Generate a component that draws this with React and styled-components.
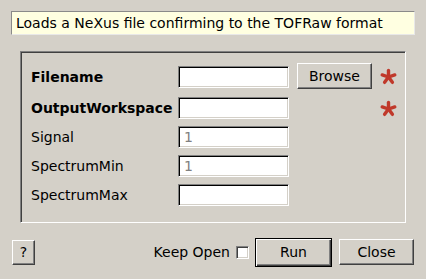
import React from "react";
import styled, { createGlobalStyle, css } from "styled-components";

const Global = createGlobalStyle`
  html, body { margin: 0; padding: 0; background: #d4d0c8; }
  body { font-family: "DejaVu Sans", "Liberation Sans", sans-serif; font-size: 14px; color: #000; }
`;

const Dialog = styled.div`
  width: 426px;
  height: 279px;
  box-sizing: border-box;
  padding: 11px;
  display: flex;
  flex-direction: column;
`;

const Info = styled.div`
  height: 24px;
  box-sizing: border-box;
  background: #ffffe1;
  border: 1px solid;
  border-color: #8a8a8a #e8e8e8 #e8e8e8 #8a8a8a;
  padding-left: 4px;
  display: flex;
  align-items: center;
  white-space: nowrap;
`;

const Frame = styled.div`
  margin: 16px 0 0 9px;
  width: 386px;
  box-sizing: border-box;
  border: 1px solid;
  border-color: #808080 #ffffff #ffffff #808080;
  box-shadow: inset 1px 1px #404040;
  padding: 11px 7px 16px 10px;
  display: grid;
  grid-template-columns: 139px 111px 75px 17px;
  grid-template-rows: 27px 22px 22px 22px 22px;
  column-gap: 8px;
  row-gap: 7px;
  align-items: center;
`;

const Label = styled.span`
  grid-column: 1;
  font-weight: ${(p) => (p.$bold ? "bold" : "normal")};
  white-space: nowrap;
`;

const Field = styled.input`
  grid-column: 2;
  width: 111px;
  height: 22px;
  box-sizing: border-box;
  margin: 0;
  font: inherit;
  color: #808080;
  background: #fff;
  border: 1px solid;
  border-color: #808080 #ffffff #ffffff #808080;
  box-shadow: inset 1px 1px #000, inset -1px -1px #d4d0c8;
  padding: 0 0 0 5px;
  outline: none;
`;

const raised = css`
  background: #d4d0c8;
  border: 1px solid;
  border-color: #ffffff #404040 #404040 #ffffff;
  box-shadow: inset -1px -1px #808080;
  font: inherit;
  color: #000;
  margin: 0;
  padding: 0;
  box-sizing: border-box;
`;

const Button = styled.button`
  ${raised};
  width: ${(p) => p.$w}px;
  height: ${(p) => p.$h}px;
`;

const BrowseButton = styled(Button)`
  grid-column: 3;
  align-self: start;
`;

const CloseButton = styled(Button)`
  margin-left: 7px;
`;

const DefaultButton = styled.button`
  width: 77px;
  height: 29px;
  box-sizing: border-box;
  background: #d4d0c8;
  border: 1px solid #000;
  box-shadow: inset 1px 1px #fff, inset -1px -1px #404040, inset -2px -2px #808080;
  font: inherit;
  color: #000;
  margin: 0;
  padding: 0;
`;

const Star = styled.svg`
  grid-column: 4;
  width: 17px;
  height: 17px;
  display: block;
`;

const Footer = styled.div`
  margin: 14px 1px 0 1px;
  height: 30px;
  display: flex;
  align-items: center;
`;

const Spacer = styled.div`
  flex: 1;
`;

const KeepOpen = styled.label`
  display: flex;
  align-items: center;
  gap: 6px;
  margin-right: 6px;
`;

const Check = styled.span`
  width: 13px;
  height: 13px;
  box-sizing: border-box;
  background: #fff;
  border: 1px solid;
  border-color: #808080 #ffffff #ffffff #808080;
  box-shadow: inset 1px 1px #404040, inset -1px -1px #d4d0c8;
`;

const Asterisk = () => (
  <Star viewBox="0 0 17 17">
    <g stroke="#c0392b" strokeWidth="3.4" strokeLinecap="round">
      {[0, 72, 144, 216, 288].map((a) => {
        const r = (a * Math.PI) / 180;
        return (
          <line
            key={a}
            x1="8.5"
            y1="9"
            x2={8.5 + Math.sin(r) * 6.6}
            y2={9 - Math.cos(r) * 6.6}
          />
        );
      })}
    </g>
  </Star>
);

export default function App() {
  return (
    <>
      <Global />
      <Dialog>
        <Info>Loads a NeXus file confirming to the TOFRaw format</Info>
        <Frame>
          <Label $bold>Filename</Label>
          <Field />
          <BrowseButton $w={75} $h={26}>Browse</BrowseButton>
          <Asterisk />

          <Label $bold>OutputWorkspace</Label>
          <Field />
          <span />
          <Asterisk />

          <Label>Signal</Label>
          <Field defaultValue="1" readOnly />
          <span />
          <span />

          <Label>SpectrumMin</Label>
          <Field defaultValue="1" readOnly />
          <span />
          <span />

          <Label>SpectrumMax</Label>
          <Field />
        </Frame>
        <Footer>
          <Button $w={23} $h={25}>?</Button>
          <Spacer />
          <KeepOpen>
            Keep Open
            <Check />
          </KeepOpen>
          <DefaultButton>Run</DefaultButton>
          <CloseButton $w={75} $h={26}>Close</CloseButton>
        </Footer>
      </Dialog>
    </>
  );
}
